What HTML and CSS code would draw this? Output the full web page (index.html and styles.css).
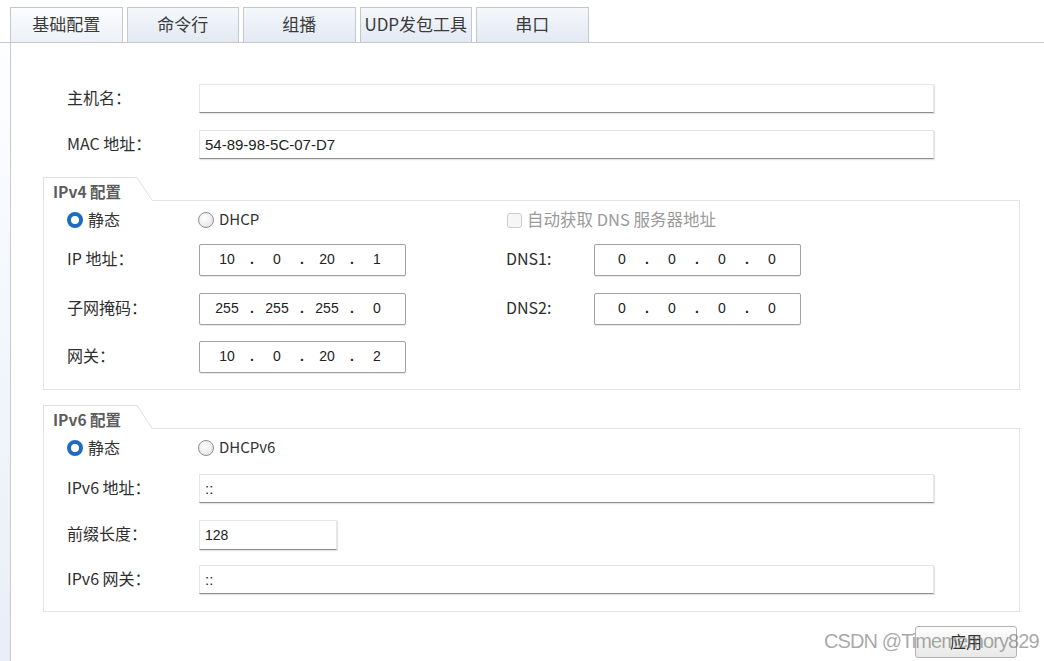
FILE: index.html
```html
<!DOCTYPE html>
<html lang="zh-CN">
<head>
<meta charset="utf-8">
<title>基础配置</title>
<link rel="stylesheet" href="styles.css">
</head>
<body>
<div class="tabs">
  <div class="tab active">基础配置</div>
  <div class="tab">命令行</div>
  <div class="tab">组播</div>
  <div class="tab">UDP发包工具</div>
  <div class="tab">串口</div>
</div>
<div class="wrap">
  <div class="strip"></div>
  <div class="panel">
    <div class="row"><span class="label">主机名：</span><div class="field wide"></div></div>
    <div class="row row-gap"><span class="label">MAC 地址：</span><div class="field wide">54-89-98-5C-07-D7</div></div>

    <div class="group g4">
      <div class="legend">
        <div class="legend-text">IPv4 配置</div>
        <svg class="legend-slant" width="16" height="24" viewBox="0 0 16 24"><polygon points="0,0 16,24 0,24" fill="#fff"/><line x1="0" y1="0.5" x2="15.5" y2="24" stroke="#e0e0e0" stroke-width="1"/></svg>
      </div>
      <div class="box box4">
        <div class="grow radio-row">
          <div class="radio"><span class="rb on"></span><span>静态</span></div>
          <div class="radio"><span class="rb"></span><span class="latin">DHCP</span></div>
          <div class="check"><span class="cb"></span><span>自动获取 DNS 服务器地址</span></div>
        </div>
        <div class="grow ip-row m14">
          <span class="label">IP 地址：</span>
          <div class="ipbox"><span class="seg">10</span><span class="dot">.</span><span class="seg">0</span><span class="dot">.</span><span class="seg">20</span><span class="dot">.</span><span class="seg">1</span></div>
          <span class="label">DNS1:</span>
          <div class="ipbox"><span class="seg">0</span><span class="dot">.</span><span class="seg">0</span><span class="dot">.</span><span class="seg">0</span><span class="dot">.</span><span class="seg">0</span></div>
        </div>
        <div class="grow ip-row m17">
          <span class="label">子网掩码：</span>
          <div class="ipbox"><span class="seg">255</span><span class="dot">.</span><span class="seg">255</span><span class="dot">.</span><span class="seg">255</span><span class="dot">.</span><span class="seg">0</span></div>
          <span class="label">DNS2:</span>
          <div class="ipbox"><span class="seg">0</span><span class="dot">.</span><span class="seg">0</span><span class="dot">.</span><span class="seg">0</span><span class="dot">.</span><span class="seg">0</span></div>
        </div>
        <div class="grow ip-row m16">
          <span class="label">网关：</span>
          <div class="ipbox"><span class="seg">10</span><span class="dot">.</span><span class="seg">0</span><span class="dot">.</span><span class="seg">20</span><span class="dot">.</span><span class="seg">2</span></div>
        </div>
      </div>
    </div>

    <div class="group g6">
      <div class="legend">
        <div class="legend-text">IPv6 配置</div>
        <svg class="legend-slant" width="16" height="24" viewBox="0 0 16 24"><polygon points="0,0 16,24 0,24" fill="#fff"/><line x1="0" y1="0.5" x2="15.5" y2="24" stroke="#e0e0e0" stroke-width="1"/></svg>
      </div>
      <div class="box box6">
        <div class="grow radio-row">
          <div class="radio"><span class="rb on"></span><span>静态</span></div>
          <div class="radio"><span class="rb"></span><span class="latin">DHCPv6</span></div>
        </div>
        <div class="row6 m16 h29"><span class="label">IPv6 地址：</span><div class="field wide">::</div></div>
        <div class="row6 m17 h30"><span class="label">前缀长度：</span><div class="field short">128</div></div>
        <div class="row6 m15 h29"><span class="label">IPv6 网关：</span><div class="field wide">::</div></div>
      </div>
    </div>

    <div class="actions"><button class="btn">应用</button></div>
  </div>
</div>
<div class="watermark">CSDN @Timememory829</div>
</body>
</html>
```

FILE: styles.css
```css
html, body {
  margin: 0;
  padding: 0;
}
body {
  width: 1044px;
  height: 661px;
  overflow: hidden;
  position: relative;
  background: #fff;
  font-family: "Noto Sans CJK SC", "Liberation Sans", sans-serif;
  font-size: 16px;
  line-height: 20px;
  color: #333;
}

/* Tabs */
.tabs {
  display: flex;
  gap: 4px;
  height: 35px;
  padding: 7px 0 0 10px;
  border-bottom: 1px solid #c6c8cc;
}
.tab {
  width: 112.5px;
  box-sizing: border-box;
  border: 1px solid #c3c8d0;
  border-bottom: none;
  background: linear-gradient(#f5f8fc, #e2e9f3);
  display: flex;
  align-items: center;
  justify-content: center;
  padding-bottom: 2px;
  font-size: 17px;
  color: #3a3a3a;
}
.tab.active {
  background: linear-gradient(#fbfcfe, #edf2f8);
}

/* Panel */
.wrap {
  display: flex;
  height: 618px;
}
.strip {
  width: 10px;
  flex: none;
  background: linear-gradient(#fdfeff, #e8eef8);
}
.panel {
  flex: 1;
  border-left: 1px solid #c8cacd;
  background: #fff;
  padding-top: 41px;
}

.row {
  display: flex;
  align-items: center;
  padding-left: 56px;
  height: 29px;
}
.row-gap {
  margin-top: 17px;
}
.label {
  width: 132px;
  flex: none;
  font-size: 16px;
  color: #2e2e2e;
  white-space: nowrap;
  padding-bottom: 4px;
}
.field {
  height: 100%;
  box-sizing: border-box;
  border: 1px solid #e6e6e6;
  border-bottom: 1px solid #8d8d8d;
  box-shadow: 1px 1px 1px rgba(0, 0, 0, 0.1);
  background: #fff;
  padding-left: 5px;
  display: flex;
  align-items: center;
  font-family: "Liberation Sans", "Noto Sans CJK SC", sans-serif;
  font-size: 15px;
  color: #222;
}
.field.wide {
  width: 735px;
}
.field.short {
  width: 138px;
  font-size: 14px;
}

/* Groups */
.group {
  margin-left: 32px;
  width: 977px;
}
.g4 {
  margin-top: 18px;
}
.g6 {
  margin-top: 15px;
}
.legend {
  display: flex;
  position: relative;
  z-index: 1;
  height: 24px;
  margin-bottom: -1px;
}
.legend-text {
  width: 94px;
  box-sizing: border-box;
  border-left: 1px solid #e0e0e0;
  border-top: 1px solid #e0e0e0;
  background: #fff;
  padding: 4px 0 0 9px;
  font-weight: bold;
  font-size: 15.5px;
  line-height: 18px;
  color: #5c5c5c;
  white-space: nowrap;
}
.legend-slant {
  display: block;
  flex: none;
}
.box {
  border: 1px solid #e3e3e3;
  background: #fff;
}
.box4 {
  padding: 9px 0 16px 23px;
}
.box6 {
  padding: 9px 0 17px 23px;
}

.grow {
  display: grid;
  grid-template-columns: 132px 307px 88px 208px;
  align-items: center;
}
.radio-row {
  height: 20px;
}
.ip-row {
  height: 32px;
}
.m14 { margin-top: 14px; }
.m15 { margin-top: 15px; }
.m16 { margin-top: 16px; }
.m17 { margin-top: 17px; }

.radio {
  display: flex;
  align-items: center;
  gap: 5px;
  font-size: 16px;
  line-height: 20px;
  height: 20px;
  color: #333;
}
.radio span:last-child {
  padding-bottom: 2px;
}
.latin {
  font-size: 15px;
}
.rb {
  width: 16px;
  height: 16px;
  box-sizing: border-box;
  border-radius: 50%;
  border: 1px solid #8e8e8e;
  background: radial-gradient(circle at 40% 35%, #ffffff, #dedede);
}
.rb.on {
  width: 16px;
  height: 16px;
  border: 4.5px solid #1d6cc0;
  background: #fff;
}
.radio-row .radio:first-child .rb {
  margin-left: 0;
}
.radio-row .radio:nth-child(2) {
  margin-left: -1px;
}
.check {
  grid-column: 3 / span 2;
  display: flex;
  align-items: center;
  gap: 5px;
  font-size: 16.5px;
  line-height: 20px;
  height: 20px;
  color: #9a9a9a;
  margin-left: 1px;
  white-space: nowrap;
}
.check span:last-child {
  padding-bottom: 2px;
}
.cb {
  width: 15px;
  height: 15px;
  box-sizing: border-box;
  border: 1px solid #cdcdcd;
  border-radius: 3px;
  background: #f6f6f6;
}

.ipbox {
  width: 207px;
  height: 32px;
  box-sizing: border-box;
  border: 1px solid #a2a2a2;
  border-radius: 2px;
  box-shadow: 0 1px 1px rgba(0, 0, 0, 0.1);
  background: #fff;
  display: flex;
  align-items: center;
  padding-left: 8px;
  padding-bottom: 2px;
  font-family: "Liberation Sans", sans-serif;
  font-size: 14px;
  color: #222;
}
.seg {
  width: 38px;
  text-align: center;
}
.dot {
  width: 12px;
  text-align: center;
  font-weight: bold;
}

.row6 {
  display: flex;
  align-items: center;
}
.h29 { height: 29px; }
.h30 { height: 30px; }

/* Actions */
.actions {
  margin: 14px 0 0 32px;
  width: 977px;
  box-sizing: border-box;
  padding-right: 3px;
  display: flex;
  justify-content: flex-end;
}
.btn {
  width: 102px;
  height: 32px;
  border: 1px solid #b3b3b3;
  border-radius: 3px;
  background: linear-gradient(#fdfdfd, #e8e8e8);
  font-family: "Noto Sans CJK SC", sans-serif;
  font-size: 16px;
  color: #333;
  padding: 0 0 2px;
}

.watermark {
  position: absolute;
  left: 824px;
  top: 629px;
  font-family: "Liberation Sans", sans-serif;
  font-size: 20px;
  line-height: 24px;
  letter-spacing: -0.9px;
  color: rgba(110, 110, 110, 0.6);
  white-space: nowrap;
}
```
